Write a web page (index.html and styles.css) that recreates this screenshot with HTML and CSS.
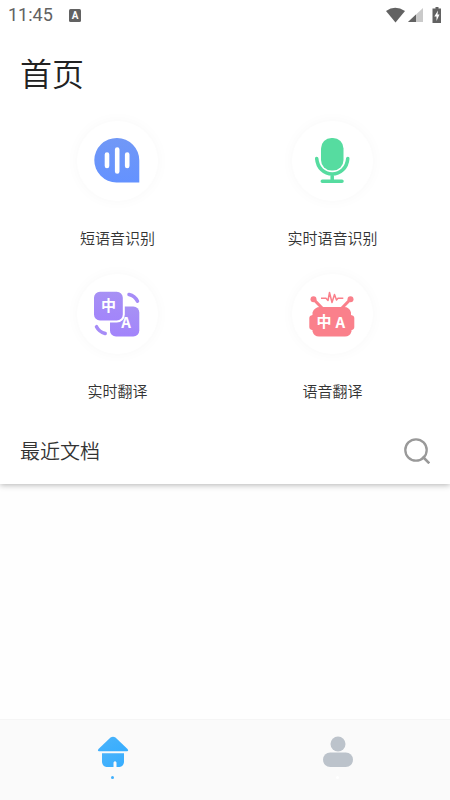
FILE: index.html
```html
<!DOCTYPE html>
<html lang="zh-CN">
<head>
<meta charset="utf-8">
<meta name="viewport" content="width=device-width, initial-scale=1">
<title>首页</title>
<link rel="stylesheet" href="styles.css">
</head>
<body>
<header class="top">
  <div class="status">
    <time class="clock">11:45</time>
    <svg class="badge" width="12" height="13" viewBox="0 0 12 13" aria-hidden="true"><rect width="12" height="13" rx="1.5" fill="#626262"/><text x="6" y="10" class="badge-letter">A</text></svg>
    <svg class="signals" width="56" height="18" viewBox="0 0 56 18" aria-hidden="true">
      <path d="M0 5Q9-1.500 19 5L9.500 16.500Z" fill="#626262"/>
      <path d="M37 2V16H22Z" fill="#cacaca"/><path d="M30 8.500V16H22Z" fill="#626262"/>
      <path d="M49.500 1h3v1.500H55V17h-8.500V2.500h3z" fill="#626262"/>
      <path d="M52 4.500L48.300 10.500H50.500V15L53.500 8.500H51.500Z" fill="#fff"/>
    </svg>
  </div>
  <h1 class="title">首页</h1>
  <nav class="features">
    <button class="feature" type="button">
      <span class="disc"><svg width="80" height="80" viewBox="0 0 80 80" aria-hidden="true">
        <defs><linearGradient id="blue" x1="0" y1="0" x2="0" y2="1"><stop stop-color="#7198f6"/><stop offset="1" stop-color="#6492ff"/></linearGradient></defs>
        <path d="M62.300 39.500V61.500H39.500A22.500 22.300 0 1 1 62.300 39.500Z" fill="url(#blue)"/>
        <path d="M30 33.500V45M40.200 28.500V50.500M50.200 33.500V45" stroke="#fff" stroke-width="4.600" stroke-linecap="round"/>
      </svg></span>
      <span class="label">短语音识别</span>
    </button>
    <button class="feature" type="button">
      <span class="disc"><svg width="80" height="80" viewBox="0 0 80 80" aria-hidden="true">
        <rect x="29" y="17" width="22.500" height="32.500" rx="10.500" fill="#56dca0"/>
        <path d="M24.700 37.500C25.500 47 32 53 40.200 53S55 47 55.800 37.500M40.200 53V60M30.300 60.300H50" fill="none" stroke="#56dca0" stroke-width="3.500" stroke-linecap="round"/>
      </svg></span>
      <span class="label">实时语音识别</span>
    </button>
    <button class="feature" type="button">
      <span class="disc"><svg width="80" height="80" viewBox="0 0 80 80" aria-hidden="true">
        <defs><linearGradient id="violet" x1="0" y1="0" x2="0" y2="1"><stop stop-color="#a791f4"/><stop offset="1" stop-color="#a284fb"/></linearGradient></defs>
        <rect x="33" y="32.500" width="29.300" height="30" rx="6" fill="url(#violet)"/>
        <rect x="16" y="16.800" width="30.800" height="30.800" rx="7" fill="url(#violet)" stroke="#fff" stroke-width="2"/>
        <path d="M52 20.500Q58 22 60.500 27.200M19.500 52.700Q22 57.700 28.200 59.500" fill="none" stroke="#a68cf7" stroke-width="3.500" stroke-linecap="round"/>
        <text x="31.500" y="37" class="glyph">中</text><text x="49" y="53.500" class="glyph">A</text>
      </svg></span>
      <span class="label">实时翻译</span>
    </button>
    <button class="feature" type="button">
      <span class="disc"><svg width="80" height="80" viewBox="0 0 80 80" aria-hidden="true">
        <g fill="#fa808b"><circle cx="21.500" cy="25.300" r="3"/><circle cx="58.500" cy="25.300" r="3"/>
        <path d="M28 33H52Q57.500 33 59 38.500V41Q62.300 41.500 62.300 44V53Q62.300 55.500 59.500 56V57.500Q58 62.500 53 62.500H27Q22 62.500 20.500 57.500V56Q17.300 55.500 17.300 53V44Q17.300 41.500 20.500 41V38.500Q22.500 33 28 33Z"/></g>
        <path d="M21.500 25.300L31 35M58.500 25.300L49 35" stroke="#fa808b" stroke-width="3"/>
        <path d="M29 24.300H34L36 26.500L37.500 18.500L40 28.500L42.500 20.500L44.500 26L46 24.300H51.300" fill="none" stroke="#fa808b" stroke-width="1.500" stroke-linejoin="round"/>
        <text x="32" y="53" class="glyph">中</text><text x="48.300" y="53.500" class="glyph">A</text>
      </svg></span>
      <span class="label">语音翻译</span>
    </button>
  </nav>
  <div class="recent">
    <h2 class="recent-title">最近文档</h2>
    <button class="search" type="button" aria-label="搜索">
      <svg width="26" height="26" viewBox="0 0 26 26" aria-hidden="true"><circle cx="12" cy="12" r="10.700" fill="none" stroke="#999" stroke-width="2.300"/><path d="M18.500 18.500L25.300 25.300" stroke="#999" stroke-width="2.600"/></svg>
    </button>
  </div>
</header>
<main class="documents"></main>
<nav class="tabs">
  <a class="tab" href="#home" aria-label="首页" aria-current="page">
    <svg width="32" height="32" viewBox="0 0 32 32" aria-hidden="true">
      <defs><linearGradient id="sky" x1="0" y1="0" x2="1" y2="1"><stop stop-color="#4bb3fa"/><stop offset="1" stop-color="#36adff"/></linearGradient></defs>
      <path d="M13.500 1.500Q16 0 18.500 1.500L30.500 13Q32 15 30 15.200H2Q0 15 1.500 13Z" fill="url(#sky)"/>
      <path d="M5 17.200H27V26Q26.500 30.500 22.500 31H19.500V26.500Q18 24 16.500 26.500V31H9.500Q5.500 30.500 5 26Z" fill="url(#sky)"/>
    </svg>
    <span class="dot"></span>
  </a>
  <a class="tab" href="#me" aria-label="我的">
    <svg width="32" height="32" viewBox="0 0 32 32" aria-hidden="true"><g fill="#bcc3cb"><circle cx="16" cy="8" r="7.500"/><rect x="1" y="16.500" width="30" height="14.500" rx="7.250"/></g></svg>
    <span class="dot"></span>
  </a>
</nav>
</body>
</html>
```
FILE: styles.css
```css
* { box-sizing: border-box; }
body {
  margin: 0;
  min-height: 100vh;
  display: flex;
  flex-direction: column;
  background: #fefefe;
  color: #333;
  font-family: "Noto Sans CJK SC", sans-serif;
}
button { padding: 0; border: 0; background: none; color: inherit; font: inherit; }
svg { display: block; }
.top { background: #fff; box-shadow: 0 1px 6px rgba(0, 0, 0, .3); }
.status {
  display: flex;
  align-items: center;
  height: 30px;
  padding: 0 8px;
}
.clock { color: #626262; font: 400 18px/30px Roboto, sans-serif; }
.badge { margin-left: 16px; }
.badge-letter { fill: #fff; font: 700 10px Roboto, sans-serif; text-anchor: middle; }
.signals { margin-left: auto; }
.title { margin: 18px 20px 25px; font-size: 32px; line-height: 48px; font-weight: 350; color: #222; }
.features {
  display: grid;
  grid-template-columns: 1fr 1fr;
  row-gap: 24px;
  padding: 0 10px;
}
.feature { display: flex; flex-direction: column; align-items: center; gap: 24px; }
.disc { width: 81px; border-radius: 50%; background: #fff; box-shadow: 0 0 14px rgba(0, 0, 0, .03); }
.label { font-size: 15px; line-height: 25px; font-weight: 350; }
.glyph { fill: #fff; font: 700 15px "Noto Sans CJK SC", sans-serif; text-anchor: middle; }
.recent {
  display: flex;
  align-items: center;
  justify-content: space-between;
  height: 66px;
  margin-top: 15px;
  padding: 0 20px;
}
.recent-title { margin: 0; font-size: 20px; line-height: 30px; font-weight: 350; }
.documents { flex: 1; }
.tabs { display: flex; height: 81px; border-top: 1px solid #f5f5f5; background: #fafafa; }
.tab { flex: 1; display: flex; flex-direction: column; align-items: center; gap: 8px; padding-top: 16px; }
.dot { width: 3px; height: 3px; border-radius: 50%; background: #fff; }
.tab[aria-current] .dot { background: #40affc; }
```
